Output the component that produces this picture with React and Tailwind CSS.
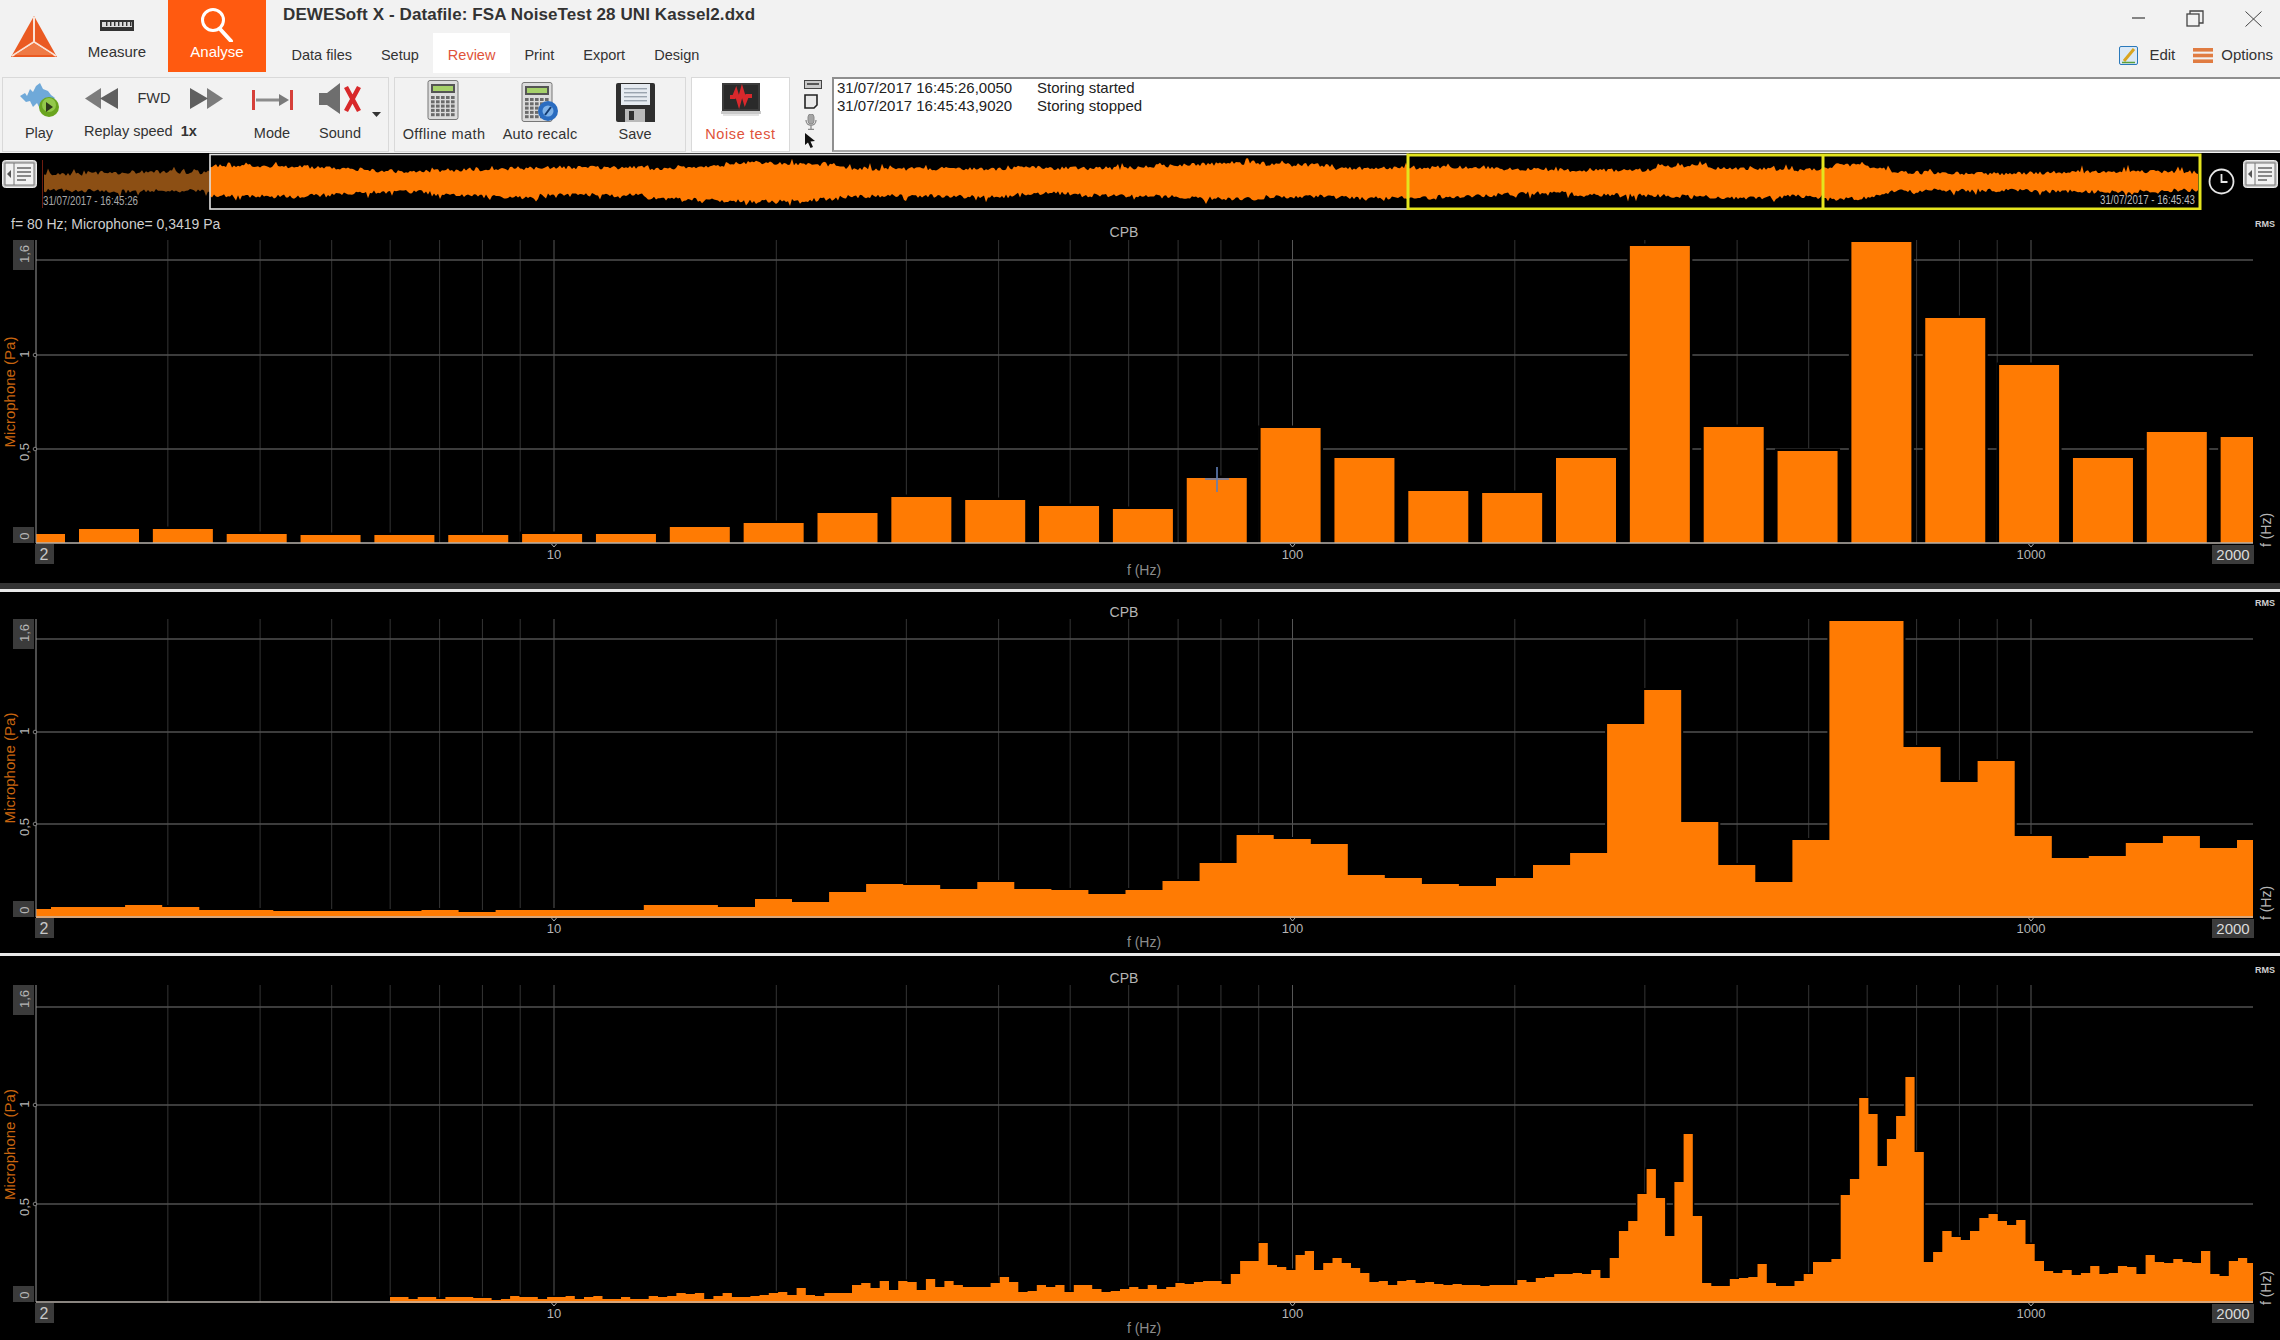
import React from "react";

const ORANGE = "#ff7b03";

const barTops = [529, 529, 534, 535, 535, 535, 534, 534, 527, 523, 513, 497, 500, 506, 509, 478, 428, 458, 491, 493, 458, 246, 427, 451, 242, 318, 365, 458, 432, 437];

const midTops = [
  907, 907, 905, 907, 910, 910, 911, 911, 911, 911, 910, 912, 910, 910, 910, 910, 905, 905,
  907, 899, 902, 892, 884, 885, 889, 882, 889, 890, 894, 890, 881, 863, 835, 839, 844, 875, 878, 884, 886, 878,
  865, 853, 724, 690, 822, 865, 882, 840, 621, 621, 747, 782, 761, 836, 858, 856, 843, 836, 848, 840,
];

const fineTops = [
  1297, 1297, 1299, 1297, 1297, 1299, 1297, 1297, 1297, 1298, 1298, 1300, 1299, 1296, 1297, 1297, 1299, 1297, 1297, 1296, 1299, 1297,
  1296, 1299, 1299, 1297, 1299, 1299, 1296, 1297, 1296, 1293, 1294, 1293, 1299, 1296, 1293, 1297, 1297, 1296, 1295, 1293, 1292, 1295,
  1288, 1295, 1296, 1293, 1293, 1293, 1285, 1283, 1288, 1281, 1290, 1281, 1282, 1290, 1279, 1287, 1281, 1285, 1287, 1287, 1287, 1283,
  1277, 1282, 1292, 1291, 1285, 1287, 1285, 1292, 1285, 1285, 1289, 1292, 1291, 1289, 1287, 1289, 1285, 1289, 1287, 1283, 1284, 1282,
  1281, 1281, 1284, 1274, 1261, 1261, 1243, 1265, 1267, 1270, 1255, 1251, 1270, 1263, 1258, 1263, 1268, 1273, 1282, 1281, 1285, 1281,
  1280, 1283, 1282, 1284, 1285, 1284, 1285, 1285, 1286, 1285, 1285, 1285, 1280, 1282, 1278, 1277, 1274, 1274, 1273, 1274, 1270, 1278,
  1258, 1231, 1221, 1194, 1169, 1198, 1236, 1182, 1134, 1216, 1283, 1286, 1286, 1279, 1278, 1277, 1264, 1283, 1286, 1286, 1281, 1274,
  1262, 1262, 1259, 1195, 1179, 1098, 1114, 1166, 1139, 1116, 1077, 1152, 1262, 1252, 1231, 1237, 1240, 1231, 1218, 1214, 1221, 1225,
  1220, 1244, 1261, 1271, 1273, 1270, 1275, 1273, 1266, 1274, 1273, 1266, 1267, 1274, 1255, 1262, 1263, 1259, 1262, 1263, 1251, 1274,
  1276, 1261, 1258, 1263,
];

const freqX = (f) => 554 + 738.5 * Math.log10(f / 10);
const minorFreqs = [3, 4, 5, 6, 7, 8, 9, 20, 30, 40, 50, 60, 70, 80, 90, 200, 300, 400, 500, 600, 700, 800, 900];

function stepPath(x0, w, tops, base, xmin, xmax) {
  let d = `M${xmin} ${base}`;
  tops.forEach((t, i) => {
    const a = Math.max(xmin, x0 + i * w);
    const b = Math.min(xmax, x0 + (i + 1) * w);
    d += `L${a.toFixed(1)} ${t}L${b.toFixed(1)} ${t}`;
  });
  return `${d}L${xmax} ${base}Z`;
}

function halfMain(x) {
  if (x > 1900) return 6 + Math.sin(x / 41);
  if (x > 1860) return 14 - ((x - 1860) / 40) * 8;
  if (x > 1823) return 14;
  return 11.5 + 2 * Math.sin(x / 95) + Math.sin(x / 37);
}

// random envelope, with blocks of loudness so the edges step like the recording does
function wavePath(x0, x1, halfAt, seed, blockSize) {
  let s = seed;
  const rnd = () => {
    s = (s * 16807) % 2147483647;
    return s / 2147483647;
  };
  const top = [];
  const bot = [];
  let nextBlock = x0;
  let topOff = 0;
  let botOff = 0;
  for (let x = x0; x <= x1; x += 2) {
    if (x >= nextBlock) {
      nextBlock = x + 40 + rnd() * 90;
      topOff = (rnd() - 0.5) * blockSize;
      botOff = (rnd() - 0.5) * blockSize;
    }
    const h = halfAt(x);
    const up = h + topOff + rnd() * 4 + (rnd() > 0.9 ? rnd() * 5 : 0);
    const dn = h + botOff + rnd() * 4 + (rnd() > 0.9 ? rnd() * 5 : 0);
    top.push(`${x} ${(181 - up).toFixed(1)}`);
    bot.unshift(`${x} ${(183 + dn).toFixed(1)}`);
  }
  return `M${top.join("L")}L${bot.join("L")}Z`;
}

function Chart({ top, height, plotTop, grid, base, titleY, rmsY, fhzY, sideY, tintFrom, children }) {
  const textMuted = "#b5b5b5";
  const micY = (grid[1] + grid[2]) / 2 - 10;
  return (
    <svg width="2280" height={height} viewBox={`0 ${top} 2280 ${height}`} className="block shrink-0">
      {minorFreqs.map((f) => (
        <line key={f} x1={freqX(f)} x2={freqX(f)} y1={plotTop} y2={base} stroke="#343434" strokeWidth="1" />
      ))}
      {[10, 100, 1000].map((f) => (
        <line key={f} x1={freqX(f)} x2={freqX(f)} y1={plotTop} y2={base} stroke="#565656" strokeWidth="1" />
      ))}
      {grid.map((y) => (
        <line key={y} x1="36" x2="2253" y1={y} y2={y} stroke="#505050" strokeWidth="1.6" />
      ))}
      {children}
      <line x1="36" x2="36" y1={plotTop} y2={base} stroke="#9a9a9a" strokeWidth="1" />
      <line x1="36" x2="2253" y1={base} y2={base} stroke="#b9b2ab" strokeWidth="1.6" />
      {tintFrom ? <line x1={tintFrom} x2="2253" y1={base} y2={base} stroke="#d9a679" strokeWidth="1.8" /> : null}

      <rect x="13" y={plotTop} width="21" height="30" fill="#3b3b3b" />
      <rect x="13" y={base - 16} width="21" height="16" fill="#3b3b3b" />
      <rect x="35" y={base + 1} width="19" height="20" fill="#3b3b3b" />
      <rect x="2212" y={base + 2} width="42" height="19" fill="#3b3b3b" />
      {[grid[1], grid[2]].map((y) => (
        <circle key={y} cx="35" cy={y} r="1.8" fill="#000" stroke="#999" strokeWidth="0.8" />
      ))}
      {[10, 100, 1000].map((f) => (
        <path key={f} d={`M${freqX(f) - 2.5} ${base + 1}l2.5 3l2.5 -3`} fill="none" stroke="#aaa" strokeWidth="1" />
      ))}

      <g fill={textMuted} fontSize="13" textAnchor="middle" dominantBaseline="central">
        <text x="24" y={plotTop + 14} transform={`rotate(-90 24 ${plotTop + 14})`}>1,6</text>
        <text x="24" y={grid[1] - 1} transform={`rotate(-90 24 ${grid[1] - 1})`}>1</text>
        <text x="24" y={grid[2] + 3} transform={`rotate(-90 24 ${grid[2] + 3})`}>0,5</text>
        <text x="24" y={base - 7} transform={`rotate(-90 24 ${base - 7})`}>0</text>
        <text x={freqX(10)} y={base + 11}>10</text>
        <text x={freqX(100)} y={base + 11}>100</text>
        <text x={freqX(1000)} y={base + 11}>1000</text>
        <text x="1124" y={titleY} fontSize="14">CPB</text>
        <text x="1144" y={fhzY} fill="#8c8c8c" fontSize="14">f (Hz)</text>
        <text x="44" y={base + 11} fontSize="16" fill="#c8c8c8">2</text>
        <text x="2233" y={base + 11} fontSize="15" fill="#dcdcdc">2000</text>
        <text x="2265" y={rmsY} fontSize="9" fontWeight="bold" fill="#d0d0d0">RMS</text>
        <text x="2266" y={sideY} fontSize="14" transform={`rotate(-90 2266 ${sideY})`}>f (Hz)</text>
        <text x="9" y={micY} fontSize="15" fill="#c9650f" transform={`rotate(-90 9 ${micY})`}>
          Microphone (Pa)
        </text>
      </g>
    </svg>
  );
}

function Logo() {
  return (
    <svg width="46" height="41" viewBox="0 0 46 41">
      <polygon points="23,0 46,41 0,41" fill="#ea5a22" />
      <path d="M23 1v25M1 40l22-14l22 14" stroke="#fbe3d6" strokeWidth="2" fill="none" />
      <polygon points="23,27 4,39 42,39" fill="#ef7a45" />
    </svg>
  );
}

function RulerIcon() {
  return (
    <svg width="34" height="11" viewBox="0 0 34 11">
      <rect width="34" height="11" fill="#333" />
      <rect x="2" y="2" width="30" height="5" fill="#ddd" />
      {[6, 10, 14, 18, 22, 26, 30].map((x) => (
        <rect key={x} x={x} y="2" width="1.4" height="4" fill="#333" />
      ))}
    </svg>
  );
}

function SearchIcon() {
  return (
    <svg width="34" height="34" viewBox="0 0 34 34" fill="none" stroke="#fff">
      <circle cx="13" cy="12" r="10.5" strokeWidth="3" />
      <path d="M20 21l11 12" strokeWidth="4" strokeLinecap="round" />
    </svg>
  );
}

function PlayIcon() {
  return (
    <svg width="39" height="34" viewBox="0 0 39 34">
      <polygon points="0,13 5,10 7,13 10,6 13,9 16,3 20,0 23,6 28,8 31,12 35,15 29,22 25,21 20,26 17,20 13,24 10,18 6,19" fill="#6fa9d9" />
      <circle cx="29" cy="24" r="10" fill="#6aa51f" />
      <circle cx="29" cy="22" r="7" fill="#93c94b" />
      <polygon points="26,19 26,29 33,24" fill="#2f3a1c" />
    </svg>
  );
}

function SkipIcon({ flip }) {
  return (
    <svg width="33" height="21" viewBox="0 0 33 21" className={flip ? "-scale-x-100" : ""}>
      <polygon points="0,10.5 16,0 16,21" fill="#7c7c7c" />
      <polygon points="15,10.5 33,0 33,21" fill="#5f5f5f" />
    </svg>
  );
}

function ModeIcon() {
  return (
    <svg width="41" height="20" viewBox="0 0 41 20">
      <rect x="0" y="0" width="3" height="20" fill="#d6403a" />
      <rect x="38" y="0" width="3" height="20" fill="#d6403a" />
      <rect x="4" y="8.5" width="24" height="3" fill="#8c8c8c" />
      <polygon points="27,4 37,10 27,16" fill="#7a7a7a" />
    </svg>
  );
}

function SoundIcon() {
  return (
    <svg width="43" height="31" viewBox="0 0 43 31">
      <polygon points="0,10 8,10 21,0 21,31 8,22 0,22" fill="#6e6e6e" />
      <path d="M27 4l13 24M40 4l-13 24" stroke="#d8282a" strokeWidth="4.5" fill="none" />
    </svg>
  );
}

function CalcIcon({ badge }) {
  const keys = [];
  for (let r = 0; r < 5; r++) {
    for (let c = 0; c < 5; c++) {
      keys.push(<rect key={`${r}-${c}`} x={4 + c * 5} y={16 + r * 4.3} width="3.6" height="3" fill="#6b6b6b" />);
    }
  }
  return (
    <svg width="38" height="40" viewBox="0 0 38 40">
      <rect x="1" y="0.5" width="30" height="39" rx="2" fill="#dcdcdc" stroke="#777" />
      <rect x="4" y="4" width="24" height="9" fill="#555" />
      <rect x="6" y="6" width="20" height="5" fill="#a6d16a" />
      {keys}
      {badge ? (
        <g>
          <circle cx="27" cy="29" r="10" fill="#2a6cc0" />
          <circle cx="27" cy="29" r="5.5" fill="#7fb2e8" />
          <path d="M24 33l6-8" stroke="#123a70" strokeWidth="2" />
        </g>
      ) : null}
    </svg>
  );
}

function SaveIcon() {
  return (
    <svg width="39" height="39" viewBox="0 0 39 39">
      <path d="M2 0h35a2 2 0 0 1 2 2v37H2a2 2 0 0 1-2-2V2a2 2 0 0 1 2-2z" fill="#2f2f2f" />
      <rect x="5" y="1" width="29" height="21" fill="#e6ebf1" />
      {[5, 9, 13, 17].map((y) => (
        <rect key={y} x="8" y={y} width="23" height="1.4" fill="#9aa4af" />
      ))}
      <rect x="9" y="26" width="20" height="13" fill="#b9b9b9" />
      <rect x="13" y="28" width="5" height="9" fill="#2f2f2f" />
    </svg>
  );
}

function NoiseIcon() {
  return (
    <svg width="40" height="34" viewBox="0 0 40 34">
      <rect x="1" y="0" width="38" height="28" fill="#3c3c3c" />
      <rect x="3" y="2" width="34" height="24" fill="#2a2a2a" />
      <path d="M9 14h4l2-5l3 10l3-11l3 10l2-5h5" stroke="#d8282c" strokeWidth="4" fill="none" />
      <rect x="0" y="28" width="40" height="3" fill="#c9c9c9" />
      <rect x="2" y="31" width="36" height="2" fill="#e3e3e3" />
    </svg>
  );
}

function LogIcons() {
  return (
    <div className="flex w-[18px] flex-col gap-[5px] pt-[3px]">
      <svg width="18" height="9" viewBox="0 0 18 9">
        <rect x="0.5" y="0.5" width="17" height="8" fill="#c9c9c9" stroke="#444" />
        <rect x="3" y="3" width="12" height="2" fill="#555" />
      </svg>
      <svg width="14" height="15" viewBox="0 0 14 15">
        <path d="M1 1h12v10l-3 3H1z" fill="#e9e9e9" stroke="#222" strokeWidth="1.6" />
      </svg>
      <svg width="14" height="16" viewBox="0 0 14 16" fill="none" stroke="#8a8a8a">
        <rect x="4" y="0" width="6" height="10" rx="3" fill="#a5a5a5" />
        <path d="M2 6c0 7 10 7 10 0M7 11v4M4 15.5h6" strokeWidth="1.3" />
      </svg>
      <svg width="12" height="15" viewBox="0 0 12 15" className="-mt-[2px]">
        <polygon points="1,0 1,12 4,9.5 6.5,15 9,14 6.5,8.5 11,8" fill="#111" />
      </svg>
    </div>
  );
}

function PanelIcon() {
  return (
    <svg width="35" height="28" viewBox="0 0 35 28">
      <rect x="0.5" y="0.5" width="34" height="27" rx="3" fill="#c9c9c9" stroke="#eee" />
      <rect x="3" y="3" width="29" height="22" fill="#f1f1f1" stroke="#777" />
      <path d="M12 3v22" stroke="#777" />
      <path d="M15 8h14M15 12h14M15 16h14M15 20h9" stroke="#666" strokeWidth="1.4" />
      <polygon points="9,10 5,14 9,18" fill="#555" />
    </svg>
  );
}

function ClockIcon() {
  return (
    <svg width="27" height="27" viewBox="0 0 27 27" fill="none" stroke="#e6e6e6">
      <circle cx="13.5" cy="13.5" r="12" strokeWidth="1.8" />
      <path d="M13.5 6v8h6" strokeWidth="1.8" />
    </svg>
  );
}

function EditIcon() {
  return (
    <svg width="19" height="19" viewBox="0 0 19 19">
      <rect x="0.5" y="0.5" width="18" height="18" rx="1.5" fill="#dbe9f6" stroke="#2a79bb" />
      <path d="M5 15L15 3" stroke="#d9a520" strokeWidth="3" />
      <path d="M3 16.5h13" stroke="#5aa03c" strokeWidth="1.5" />
    </svg>
  );
}

function OptionsIcon() {
  return (
    <svg width="20" height="15" viewBox="0 0 20 15" fill="#e07c42">
      <rect width="20" height="3.6" />
      <rect y="5.7" width="20" height="3.6" />
      <rect y="11.4" width="20" height="3.6" />
    </svg>
  );
}

function WindowControls() {
  return (
    <div className="flex items-center pr-[18px] pt-[10px]">
      <svg width="13" height="17" viewBox="0 0 13 17" stroke="#555">
        <path d="M0 8h13" strokeWidth="1.4" />
      </svg>
      <svg width="18" height="17" viewBox="0 0 18 17" fill="none" stroke="#444" strokeWidth="1.3" className="ml-[41px]">
        <rect x="1" y="4" width="12" height="12" />
        <path d="M4 4V1h13v12h-4" />
      </svg>
      <svg width="17" height="16" viewBox="0 0 17 16" stroke="#444" className="ml-[41px]">
        <path d="M0.5 0.5l16 15M16.5 0.5l-16 15" strokeWidth="1" />
      </svg>
    </div>
  );
}

function Tool({ width, iconHeight = 41, label, labelClass = "", children }) {
  return (
    <div className="flex h-full shrink-0 flex-col items-center" style={{ width }}>
      <div className="flex items-start justify-center" style={{ height: iconHeight }}>
        {children}
      </div>
      <span className={`whitespace-nowrap text-[14.5px] leading-[18px] ${labelClass}`}>{label}</span>
    </div>
  );
}

function Header() {
  const tabs = ["Data files", "Setup", "Review", "Print", "Export", "Design"];
  return (
    <header className="flex h-[77px] shrink-0 bg-[#f2f2f2] text-[#333]">
      <div className="w-[84px] pl-[11px] pt-[16px]">
        <Logo />
      </div>
      <div className="flex w-[66px] flex-col items-center pt-[20px]">
        <RulerIcon />
        <span className="mt-[11px] text-[15px] leading-[20px]">Measure</span>
      </div>
      <div className="ml-[18px] flex h-[72px] w-[98px] flex-col items-center bg-[#ff5a10] pt-[8px] text-white">
        <SearchIcon />
        <span className="text-[15px] leading-[20px]">Analyse</span>
      </div>
      <div className="ml-[17px] flex flex-col">
        <h1 className="h-[33px] pt-[4px] text-[17px] font-bold leading-[22px] tracking-[0.1px]">DEWESoft X - Datafile: FSA NoiseTest 28 UNI Kassel2.dxd</h1>
        <nav className="-ml-[6px] flex h-[40px]">
          {tabs.map((tab) => (
            <span
              key={tab}
              className={`px-[14.5px] text-[14.5px] leading-[44px] ${tab === "Review" ? "bg-white text-[#e0533a]" : ""}`}
            >
              {tab}
            </span>
          ))}
        </nav>
      </div>
      <div className="ml-auto flex flex-col items-end">
        <WindowControls />
        <div className="mt-[17px] flex items-center pr-[7px] text-[15px]">
          <EditIcon />
          <span className="ml-[11px]">Edit</span>
          <span className="ml-[18px]">
            <OptionsIcon />
          </span>
          <span className="ml-[8px]">Options</span>
        </div>
      </div>
    </header>
  );
}

function Ribbon() {
  return (
    <div className="flex h-[76px] shrink-0 bg-[#f2f2f2] text-[#333]">
      <div className="ml-[2px] flex h-[75px] w-[387px] border border-[#d9d9d9] pl-[14px] pt-[5px]">
        <Tool width={44} label="Play">
          <PlayIcon />
        </Tool>
        <div className="ml-[23px] flex w-[142px] flex-col">
          <div className="flex h-[39px] items-start justify-between pt-[5px] pr-[3px] pl-[1px]">
            <SkipIcon />
            <span className="text-[14.5px] leading-[20px]">FWD</span>
            <SkipIcon flip />
          </div>
          <div className="flex whitespace-nowrap text-[14.5px] leading-[18px]">
            <span>Replay speed</span>
            <span className="ml-[8px] font-bold">1x</span>
          </div>
        </div>
        <div className="ml-[24px]">
          <Tool width={44} label="Mode">
            <div className="pt-[7px]">
              <ModeIcon />
            </div>
          </Tool>
        </div>
        <div className="ml-[23px]">
          <Tool width={46} label="Sound">
            <SoundIcon />
          </Tool>
        </div>
        <svg width="9" height="5" viewBox="0 0 9 5" className="ml-[9px] mt-[29px]">
          <polygon points="0,0 9,0 4.5,5" fill="#333" />
        </svg>
      </div>
      <div className="ml-[5px] flex h-[75px] w-[292px] border border-[#d9d9d9] pl-[7px] pt-[2px]">
        <Tool width={84} iconHeight={45} label="Offline math" labelClass="tracking-[0.4px]">
          <div className="pl-[3px]">
            <CalcIcon />
          </div>
        </Tool>
        <div className="ml-[16px]">
          <Tool width={76} iconHeight={45} label="Auto recalc" labelClass="tracking-[0.2px]">
            <div className="pt-[2px]">
              <CalcIcon badge />
            </div>
          </Tool>
        </div>
        <div className="ml-[37px]">
          <Tool width={40} iconHeight={45} label="Save">
            <div className="pt-[3px]">
              <SaveIcon />
            </div>
          </Tool>
        </div>
      </div>
      <div className="ml-[5px] h-[75px] w-[99px] border border-[#d9d9d9] bg-white pt-[5px]">
        <Tool width={97} iconHeight={42} label="Noise test" labelClass="tracking-[0.6px] text-[#e0533a]">
          <NoiseIcon />
        </Tool>
      </div>
      <div className="ml-[14px]">
        <LogIcons />
      </div>
      <div className="ml-[10px] h-[75px] flex-1 border-2 border-r-0 border-[#8f8f8f] border-b-[#a8a8a8] bg-white pl-[3px] text-[15px] leading-[18px] text-[#222]">
        <div className="flex">
          <span className="w-[200px]">31/07/2017 16:45:26,0050</span>
          <span>Storing started</span>
        </div>
        <div className="flex">
          <span className="w-[200px]">31/07/2017 16:45:43,9020</span>
          <span>Storing stopped</span>
        </div>
      </div>
    </div>
  );
}

function Overview() {
  return (
    <div className="flex h-[57px] shrink-0 bg-black">
      <div className="w-[40px] pl-[2px] pt-[7px]">
        <PanelIcon />
      </div>
      <svg width="2162" height="57" viewBox="40 153 2162 57" className="block shrink-0">
        <line x1="42.5" x2="42.5" y1="160" y2="208" stroke="#6e1d10" />
        <path d={wavePath(44, 210, () => 6, 77, 2)} fill="#8c4f14" />
        <path d={wavePath(210, 2199, halfMain, 9173, 5)} fill={ORANGE} />
        <rect x="210" y="154.5" width="1198" height="54.5" fill="none" stroke="#e2e2e2" strokeWidth="1.6" />
        <rect x="1408" y="155" width="792" height="54" fill="none" stroke="#e4e41e" strokeWidth="3" />
        <rect x="1821.5" y="155" width="3" height="54" fill="#e4e41e" />
        <text transform="translate(43 205) scale(0.81 1)" fontSize="12" fill="#a8a8a8">31/07/2017 - 16:45:26</text>
        <text transform="translate(2100 204) scale(0.81 1)" fontSize="12" fill="#bdbdbd">31/07/2017 - 16:45:43</text>
      </svg>
      <div className="ml-[6px] pt-[15px]">
        <ClockIcon />
      </div>
      <div className="ml-[8px] pt-[7px]">
        <PanelIcon />
      </div>
    </div>
  );
}

export default function App() {
  return (
    <div className="flex h-[1340px] w-[2280px] flex-col overflow-hidden bg-black font-['Liberation_Sans',Arial,sans-serif]">
      <Header />
      <Ribbon />
      <Overview />

      <Chart top={210} height={373} plotTop={240} grid={[260, 355, 449]} base={543} titleY={232} rmsY={224} fhzY={570} sideY={530}>
        <text x="11" y="229" fontSize="14" fill="#cfcfcf">f= 80 Hz; Microphone= 0,3419 Pa</text>
        <rect x="36" y="534" width="29" height="9" fill={ORANGE} stroke="#000" strokeWidth="3" paintOrder="stroke" />
        {barTops.map((t, i) => {
          const x = 79 + i * 73.85;
          const w = Math.min(60, 2253 - x);
          return <rect key={i} x={x} y={t} width={w} height={543 - t} fill={ORANGE} stroke="#000" strokeWidth="5" paintOrder="stroke" />;
        })}
        <path d="M1217 467v25M1205 479h24" stroke="#5f7fb8" strokeWidth="1.6" />
      </Chart>
      <div className="h-[6px] shrink-0 bg-[#333]" />
      <div className="h-[3px] shrink-0 bg-[#e8e8e8]" />

      <Chart top={592} height={361} plotTop={619} grid={[639, 732, 824]} base={917} titleY={612} rmsY={603} fhzY={942} sideY={903} tintFrom={36}>
        <path d={stepPath(14, 37.05, [909, ...midTops], 916, 36, 2253)} fill={ORANGE} stroke="#000" strokeWidth="4" paintOrder="stroke" />
      </Chart>
      <div className="h-[3px] shrink-0 bg-[#e8e8e8]" />

      <Chart top={956} height={384} plotTop={985} grid={[1007, 1105, 1204]} base={1302} titleY={978} rmsY={970} fhzY={1328} sideY={1288} tintFrom={390}>
        <path d={stepPath(390, 9.24, fineTops, 1301, 390, 2253)} fill={ORANGE} stroke="#000" strokeWidth="3" paintOrder="stroke" />
      </Chart>
    </div>
  );
}
